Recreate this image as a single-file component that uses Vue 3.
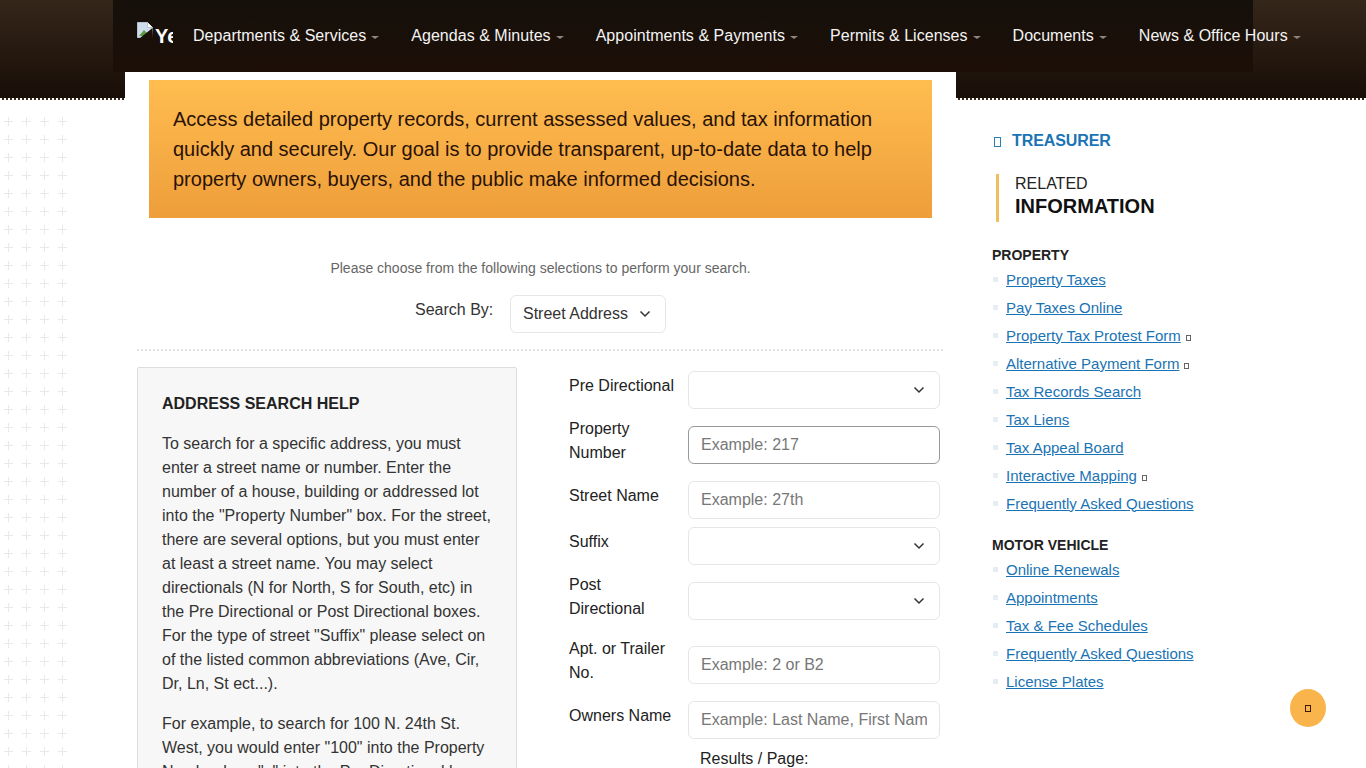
<script setup>
const navItems = [
  'Departments & Services',
  'Agendas & Minutes',
  'Appointments & Payments',
  'Permits & Licenses',
  'Documents',
  'News & Office Hours'
]
const fields = [
  { label: 'Pre Directional', kind: 'select', cls: 'r-pre' },
  { label: 'Property Number', kind: 'input', ph: 'Example: 217', cls: 'r-num two', focus: true },
  { label: 'Street Name', kind: 'input', ph: 'Example: 27th', cls: 'r-street' },
  { label: 'Suffix', kind: 'select', cls: 'r-suffix' },
  { label: 'Post Directional', kind: 'select', cls: 'r-post two' },
  { label: 'Apt. or Trailer No.', kind: 'input', ph: 'Example: 2 or B2', cls: 'r-apt two' },
  { label: 'Owners Name', kind: 'input', ph: 'Example: Last Name, First Name', cls: 'r-owner' }
]
const groups = [
  {
    title: 'PROPERTY',
    links: [
      { t: 'Property Taxes' },
      { t: 'Pay Taxes Online' },
      { t: 'Property Tax Protest Form', ext: true },
      { t: 'Alternative Payment Form', ext: true },
      { t: 'Tax Records Search' },
      { t: 'Tax Liens' },
      { t: 'Tax Appeal Board' },
      { t: 'Interactive Mapping', ext: true },
      { t: 'Frequently Asked Questions' }
    ]
  },
  {
    title: 'MOTOR VEHICLE',
    links: [
      { t: 'Online Renewals' },
      { t: 'Appointments' },
      { t: 'Tax & Fee Schedules' },
      { t: 'Frequently Asked Questions' },
      { t: 'License Plates' }
    ]
  }
]
</script>

<template>
  <div class="screen">
    <header class="header">
      <nav class="nav">
        <a class="logo">
          <svg class="broken" width="16" height="16" viewBox="0 0 16 16">
            <path d="M0.5 0.5H10.5L15.5 5.5V15.5H0.5Z" fill="#cfdcec" stroke="#b9c2cc" />
            <path d="M10.5 0.5V5.5H15.5" fill="#fff" stroke="#b9c2cc" />
            <path d="M2 14L7 8L10 11L15 7V14Z" fill="#5f9a45" />
            <path d="M15.5 6L3 16H16Z" fill="#1b0f08" />
          </svg>
          <span class="alt">Ye</span>
        </a>
        <a v-for="item in navItems" :key="item" class="nav-link">
          {{ item }}<i class="caret"></i>
        </a>
      </nav>
    </header>

    <div class="page">
      <svg class="pattern" width="72" height="680" aria-hidden="true">
        <defs>
          <pattern id="plus" width="18" height="18" patternUnits="userSpaceOnUse">
            <path d="M4 8.5H13M8.5 4V13" stroke="#e9e9e9" fill="none" />
          </pattern>
        </defs>
        <rect width="72" height="680" fill="url(#plus)" />
      </svg>
      <main class="main">
        <div class="banner">
          Access detailed property records, current assessed values, and tax information quickly and securely. Our goal is to provide transparent, up-to-date data to help property owners, buyers, and the public make informed decisions.
        </div>
        <p class="intro">Please choose from the following selections to perform your search.</p>
        <div class="search-by">
          <label class="sb-label">Search By:</label>
          <div class="sb-select">
            Street Address
            <svg class="chev" width="12" height="8" viewBox="0 0 12 8"><path d="M1.5 1.5L6 6L10.5 1.5" fill="none" stroke="#333" stroke-width="1.5" /></svg>
          </div>
        </div>
        <div class="divider"></div>
        <div class="columns">
          <aside class="help">
            <h3 class="help-title">ADDRESS SEARCH HELP</h3>
            <p>To search for a specific address, you must enter a street name or number. Enter the number of a house, building or addressed lot into the "Property Number" box. For the street, there are several options, but you must enter at least a street name. You may select directionals (N for North, S for South, etc) in the Pre Directional or Post Directional boxes. For the type of street "Suffix" please select on of the listed common abbreviations (Ave, Cir, Dr, Ln, St ect...).</p>
            <p>For example, to search for 100 N. 24th St. West, you would enter "100" into the Property Number box, "n" into the Pre Directional box.</p>
          </aside>
          <form class="form">
            <div v-for="f in fields" :key="f.label" class="row" :class="f.cls">
              <label class="lbl">{{ f.label }}</label>
              <div v-if="f.kind === 'select'" class="ctl">
                <svg class="chev" width="12" height="8" viewBox="0 0 12 8"><path d="M1.5 1.5L6 6L10.5 1.5" fill="none" stroke="#333" stroke-width="1.5" /></svg>
              </div>
              <input v-else class="ctl txt" :class="{ focus: f.focus }" :placeholder="f.ph" />
            </div>
            <div class="results">Results / Page:</div>
          </form>
        </div>
      </main>

      <aside class="side">
        <a class="dept"><i class="tofu tofu-lg"></i>TREASURER</a>
        <div class="related">
          <span class="rel-a">RELATED</span>
          <strong class="rel-b">INFORMATION</strong>
        </div>
        <section v-for="g in groups" :key="g.title" class="group">
          <h4 class="g-title">{{ g.title }}</h4>
          <ul class="g-list">
            <li v-for="l in g.links" :key="l.t">
              <a class="g-link">{{ l.t }}</a><i v-if="l.ext" class="tofu tofu-sm"></i>
            </li>
          </ul>
        </section>
      </aside>
    </div>

    <button class="to-top" aria-label="Back to top"><i class="tofu tofu-top"></i></button>
  </div>
</template>

<style>
html, body { margin: 0; overflow: hidden; background: #fff; }
</style>

<style scoped>
.screen {
  position: relative;
  width: 1366px;
  height: 768px;
  overflow: hidden;
  background: #fff;
  font-family: "Liberation Sans", Arial, sans-serif;
  color: #222;
}
.header {
  box-sizing: border-box;
  height: 100px;
  padding-left: 113px;
  background: linear-gradient(#35261a, #180e07);
  border-bottom: 2px dotted #fff;
}
.nav {
  display: flex;
  align-items: center;
  box-sizing: border-box;
  width: 1140px;
  height: 72px;
  padding-left: 24px;
  background: linear-gradient(#15100a, #1d0f08);
  white-space: nowrap;
  position: relative;
  z-index: 2;
}
.logo {
  flex: none;
  align-self: flex-start;
  display: flex;
  align-items: flex-start;
  width: 36px;
  height: 26px;
  margin: 22px 20px 0 0;
  overflow: hidden;
}
.broken { flex: none; }
.alt {
  margin-top: 3px;
  margin-left: 2px;
  font-size: 20px;
  line-height: 23px;
  font-weight: 700;
  color: #fff;
}
.nav-link {
  flex: none;
  display: flex;
  align-items: center;
  margin-right: 32px;
  color: #f4f4f4;
  font-size: 16px;
  letter-spacing: 0.035px;
}
.caret {
  width: 0;
  height: 0;
  margin-left: 5px;
  margin-top: 2px;
  border-left: 4px solid transparent;
  border-right: 4px solid transparent;
  border-top: 3px solid #8d8780;
}
.page {
  display: flex;
  margin-top: -28px;
  position: relative;
}
.pattern {
  flex: none;
  display: block;
  margin-top: 41px;
  margin-right: 53px;
}
.main {
  flex: none;
  box-sizing: border-box;
  width: 831px;
  padding: 8px 13px 0 12px;
  background: #fff;
}
.banner {
  box-sizing: border-box;
  width: 783px;
  margin-left: 12px;
  padding: 24px;
  background: linear-gradient(#ffbd50, #ee9e3a);
  color: #2a1206;
  font-size: 20px;
  line-height: 30px;
}
.intro {
  margin: 42px 0 0;
  text-align: center;
  font-size: 14px;
  line-height: 16px;
  color: #666;
  width: 807px;
}
.search-by {
  display: flex;
  align-items: flex-start;
  margin-top: 19px;
  padding-left: 278px;
  height: 38px;
}
.sb-label {
  font-size: 16px;
  line-height: 18px;
  color: #333;
  margin-top: 6px;
  width: 95px;
}
.sb-select {
  display: flex;
  align-items: center;
  justify-content: space-between;
  box-sizing: border-box;
  width: 156px;
  height: 38px;
  padding: 0 14px 0 12px;
  border: 1px solid #e6e6e6;
  border-radius: 6px;
  font-size: 16px;
  color: #333;
}
.divider {
  margin-top: 16px;
  border-top: 2px dotted #e0e0e0;
  width: 806px;
}
.columns {
  display: flex;
  margin-top: 16px;
}
.help {
  flex: none;
  box-sizing: border-box;
  width: 380px;
  padding: 25px 24px 24px;
  background: #f7f7f7;
  border: 1px solid #ddd;
  border-radius: 2px;
  font-size: 16px;
  line-height: 24px;
  color: #333;
}
.help-title {
  margin: 0 0 17px;
  font-size: 16px;
  line-height: 22px;
  font-weight: 700;
  color: #222;
}
.help p { margin: 0 0 16px; }
.form {
  flex: none;
  width: 371px;
  margin-left: 52px;
  padding-top: 4px;
}
.row {
  display: flex;
  align-items: flex-start;
  justify-content: space-between;
}
.row.two { align-items: flex-end; }
.lbl {
  width: 112px;
  font-size: 16px;
  line-height: 24px;
  color: #222;
  margin-top: 3px;
}
.row.two .lbl { margin-top: 0; margin-bottom: -1px; }
.ctl {
  flex: none;
  display: flex;
  align-items: center;
  justify-content: flex-end;
  box-sizing: border-box;
  width: 252px;
  height: 38px;
  padding: 0 14px 0 12px;
  background: #fff;
  border: 1px solid #e6e6e6;
  border-radius: 6px;
  font-family: inherit;
  font-size: 16px;
  color: #333;
  outline: none;
}
.ctl.txt { padding-right: 12px; }
.ctl::placeholder { color: #777; opacity: 1; }
.ctl.focus { border-color: #999; }
.r-num { margin-top: 8px; }
.r-street { margin-top: 17px; }
.r-suffix { margin-top: 8px; }
.r-post { margin-top: 8px; }
.r-apt { margin-top: 17px; }
.r-owner { margin-top: 17px; }
.results {
  margin-top: 8px;
  padding-left: 131px;
  font-size: 16px;
  line-height: 24px;
  color: #222;
}
.side {
  flex: none;
  width: 300px;
  margin-left: 36px;
  padding-top: 57px;
}
.dept {
  display: flex;
  align-items: center;
  height: 24px;
  font-size: 16px;
  font-weight: 700;
  letter-spacing: -0.1px;
  color: #1a73b4;
}
.tofu {
  display: inline-block;
  box-sizing: border-box;
  border: 1px solid #555;
}
.tofu-lg {
  flex: none;
  width: 7px;
  height: 10px;
  margin: 2px 11px 0 2px;
  border-color: #2b7fb9;
}
.tofu-sm {
  flex: none;
  width: 5px;
  height: 6px;
  margin: 5px 0 0 5px;
  border-color: #666;
}
.related {
  display: flex;
  flex-direction: column;
  margin: 21px 0 0 4px;
  padding-left: 16px;
  height: 48px;
  border-left: 3px solid #f0bd60;
}
.rel-a { font-size: 16px; line-height: 18px; color: #222; margin-top: 1px; }
.rel-b { font-size: 20px; line-height: 26px; color: #111; }
.group { margin-top: 24px; }
.group + .group { margin-top: 19px; }
.g-title {
  margin: 0;
  font-size: 14px;
  line-height: 18px;
  font-weight: 700;
  color: #222;
}
.g-list { list-style: none; margin: 1px 0 0; padding: 0; }
.g-list li {
  display: flex;
  align-items: center;
  height: 28px;
  padding-left: 14px;
  background: linear-gradient(#e6eef4, #e6eef4) 1px 12px / 5px 5px no-repeat;
}
.g-link {
  font-size: 15px;
  color: #1a73b4;
  text-decoration: underline;
}
.to-top {
  position: absolute;
  left: 1290px;
  top: 689px;
  display: flex;
  align-items: center;
  justify-content: center;
  width: 36px;
  height: 38px;
  padding: 0;
  border: 0;
  border-radius: 50%;
  background: #f9b44b;
}
.tofu-top {
  width: 6px;
  height: 7px;
  border-color: #3a1a05;
}
</style>
